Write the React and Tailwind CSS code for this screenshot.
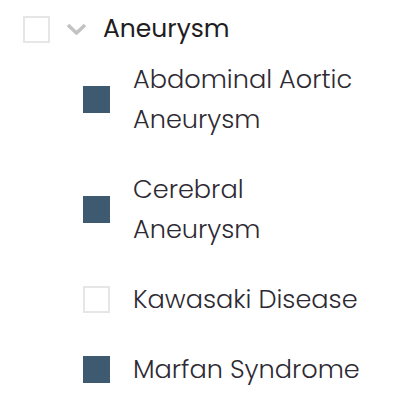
import { useState } from 'react'

const hijos = [
    { id: 'aaa', nombre: 'Abdominal Aortic Aneurysm', marcado: true },
    { id: 'cerebral', nombre: 'Cerebral Aneurysm', marcado: true },
    { id: 'kawasaki', nombre: 'Kawasaki Disease', marcado: false },
    { id: 'marfan', nombre: 'Marfan Syndrome', marcado: true },
]

function Casilla({ marcado, onClick }) {
    return (
        <button
            type="button"
            onClick={onClick}
            className={
                marcado
                    ? 'h-[27px] w-[27px] shrink-0 bg-[#3d5a71]'
                    : 'h-[27px] w-[27px] shrink-0 border-2 border-[#e6e6e6] bg-white'
            }
        />
    )
}

export default function App() {
    const [seleccion, setSeleccion] = useState(() => Object.fromEntries(hijos.map((h) => [h.id, h.marcado])))
    const [abierto, setAbierto] = useState(true)

    const alternar = (id) => setSeleccion((s) => ({ ...s, [id]: !s[id] }))

    return (
        <div className="min-h-[406px] w-[400px] bg-white pt-[9px] font-['Poppins','Inter',sans-serif] font-light text-[#2e2a33]">
            <div className="flex h-[40px] items-center pl-[23px]">
                <Casilla marcado={false} />
                <button type="button" onClick={() => setAbierto(!abierto)} className="ml-[16px] text-[#c2c2c2]">
                    <svg width="21" height="12" viewBox="0 0 21 12" fill="none">
                        <path d="M2 2l8.5 8 8.5-8" stroke="currentColor" strokeWidth="3.5" />
                    </svg>
                </button>
                <span className="ml-[16px] text-[25px] leading-[40px] font-normal text-[#1f1c22]">Aneurysm</span>
            </div>

            {abierto && (
                <ul className="mt-[10px] flex flex-col gap-[30px] pl-[83px]">
                    {hijos.map((h) => (
                        <li key={h.id} className="flex items-center gap-[23px]">
                            <Casilla marcado={seleccion[h.id]} onClick={() => alternar(h.id)} />
                            <span className="w-[240px] text-[25.6px] leading-[40px]">{h.nombre}</span>
                        </li>
                    ))}
                </ul>
            )}
        </div>
    )
}
